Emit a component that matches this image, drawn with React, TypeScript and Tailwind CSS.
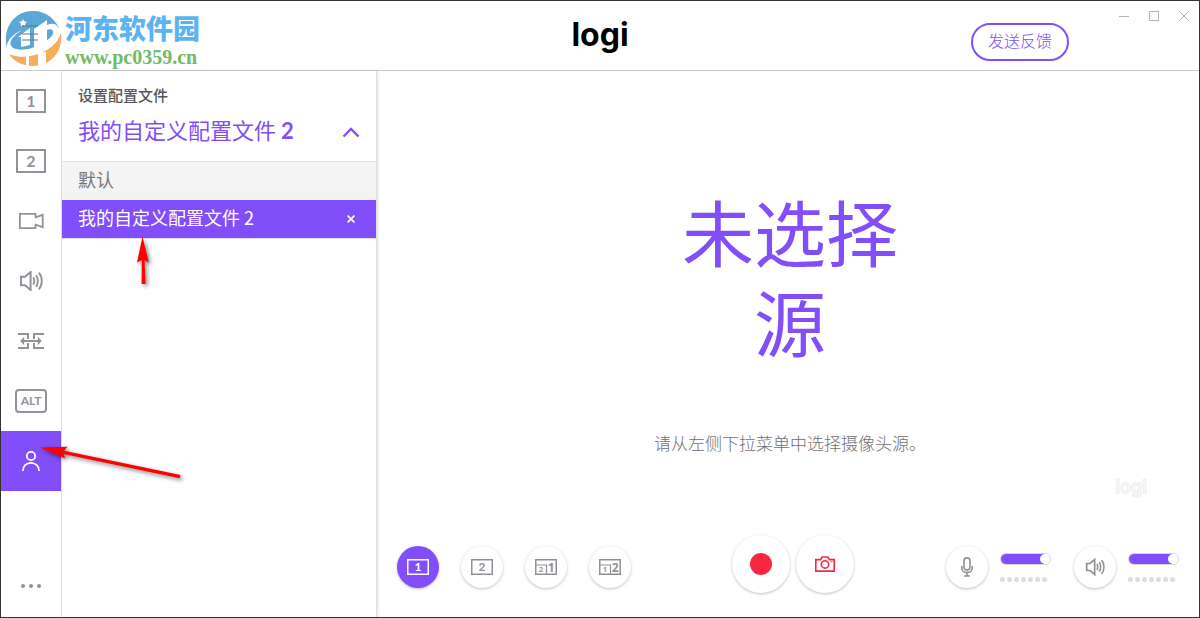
import { useState, ReactNode } from "react";

const profiles = ["默认", "我的自定义配置文件 2"];

interface IconProps {
    className?: string;
}

function SceneIcon({ label }: { label: string }) {
    return (
        <svg width="30" height="24" viewBox="0 0 30 24" fill="none" stroke="currentColor">
            <rect x="1" y="1" width="28" height="22" strokeWidth="2" />
            <text x="15" y="17.5" textAnchor="middle" fontSize="16" fontWeight="700" fill="currentColor" stroke="none" className="font-['Lato',sans-serif]">
                {label}
            </text>
        </svg>
    );
}

function SmallSceneIcon({ label }: { label: string }) {
    return (
        <svg width="22" height="16" viewBox="0 0 22 16" fill="none" stroke="currentColor">
            <rect x="0.75" y="0.75" width="20.5" height="14.5" strokeWidth="1.5" />
            <text x="11" y="12.3" textAnchor="middle" fontSize="12" fontWeight="700" fill="currentColor" stroke="none" className="font-['Lato',sans-serif]">
                {label}
            </text>
        </svg>
    );
}

function PipIcon({ main, inset }: { main: string; inset: string }) {
    return (
        <svg width="22" height="16" viewBox="0 0 22 16" fill="none" stroke="currentColor">
            <rect x="0.75" y="0.75" width="20.5" height="14.5" strokeWidth="1.5" />
            <path d="M1 6h10.5v9" strokeWidth="1.2" />
            <text x="6" y="13.3" textAnchor="middle" fontSize="7" fontWeight="700" fill="currentColor" stroke="none" className="font-['Noto_Sans',sans-serif]">
                {inset}
            </text>
            <text x="16.2" y="12.6" textAnchor="middle" fontSize="12" fontWeight="700" fill="currentColor" stroke="none" className="font-['Noto_Sans',sans-serif]">
                {main}
            </text>
        </svg>
    );
}

function VideoIcon() {
    return (
        <svg width="26" height="18" viewBox="0 0 26 18" fill="none" stroke="currentColor" strokeWidth="1.8">
            <path d="M17.5 5.5V1.9H1.9v14.2h15.6v-3.6M16.8 5.6l7.9-2.8v12.4l-7.9-2.8" />
        </svg>
    );
}

function SpeakerIcon({ className }: IconProps) {
    return (
        <svg width="24" height="20" viewBox="0 0 24 20" fill="none" stroke="currentColor" className={className}>
            <path d="M2 5.8h4L11.6 1v18L6 14.2H2z" strokeWidth="2" />
            <path d="M14.2 6.4c1.4 1.8 1.4 5.4 0 7.2M17 4.2c2.4 3 2.4 8.6 0 11.6M19.8 1.6c4 4.6 4 12.2 0 16.8" strokeWidth="1.9" />
        </svg>
    );
}

function TransitionIcon() {
    return (
        <svg width="26" height="16" viewBox="0 0 26 16" fill="none" stroke="currentColor" strokeWidth="2">
            <path d="M0 1h10v5M0 15h10v-5M26 1H16v5M26 15H16v-5M4.5 8h17" />
            <path d="M2.2 8l4-4.2v8.4zM23.8 8l-4-4.2v8.4z" fill="currentColor" stroke="none" />
        </svg>
    );
}

function AltIcon() {
    return (
        <span className="flex h-6 w-8 items-center justify-center rounded-[4px] border-2 border-[#929298] font-['Lato',sans-serif] text-xs leading-none font-bold">
            ALT
        </span>
    );
}

function UserIcon() {
    return (
        <svg width="20" height="22" viewBox="0 0 20 22" fill="none" stroke="currentColor" strokeWidth="1.8">
            <circle cx="10" cy="6" r="4.2" />
            <path d="M1.9 21c0-4.8 3.2-8.2 8.1-8.2s8.1 3.4 8.1 8.2" />
        </svg>
    );
}

function DotsIcon() {
    return (
        <svg width="20" height="4" viewBox="0 0 20 4" fill="currentColor">
            <circle cx="2" cy="2" r="2" />
            <circle cx="10" cy="2" r="2" />
            <circle cx="18" cy="2" r="2" />
        </svg>
    );
}

function CameraIcon() {
    return (
        <svg width="20" height="16" viewBox="0 0 20 16" fill="none" stroke="currentColor" strokeWidth="1.6">
            <path d="M.8 3.6h4.8L7.2 1h5.6l1.6 2.6h4.8v11.5H.8z" />
            <circle cx="10" cy="8.4" r="3.7" />
            <path d="M15.6 5.8h1.8" strokeWidth="1" />
        </svg>
    );
}

function MicIcon() {
    return (
        <svg width="12" height="20" viewBox="0 0 12 20" fill="none" stroke="currentColor" strokeWidth="1.6">
            <rect x="3" y=".9" width="6" height="12.2" rx="3" />
            <path d="M.8 9v2.2c0 2.6 2.2 4.4 5.2 4.4s5.2-1.8 5.2-4.4V9M6 15.6v3.4M3 19h6" />
        </svg>
    );
}

// Blue and orange badge of the download site
function SiteBadge() {
    return (
        <svg width="57" height="57" viewBox="0 0 57 57">
            <path d="M2 38C-3 20 8 1 28 1c13 0 23 8 27 20-1 8-7 14-17 19C26 46 9 46 2 38z" fill="#5aa7d8" />
            <path d="M4 44c14 7 40-1 52-21 2 19-10 33-28 33C17 56 8 51 4 44z" fill="#f6ad5c" />
            <path d="M21 46h3v11h-3zM33 42h8v14h-8z" fill="#fff" />
            <path d="M13 27l12-9v17l-9 2V27zM29 38V19l13-9v5c7-3 12 0 11 6-1 7-6 12-12 14v-4c5-3 8-7 7-10-1-2-4-2-6-1v14l-8 4z" fill="#fff" />
            <path d="M17 20C7 26 3 33 7 37c5 5 22 3 34-6 8-5 13-11 13-17 6 11-4 23-18 29C21 49 4 48 2 38c-1-7 6-14 15-18z" fill="#fff" />
            <path d="M18 9l1.3 2.5 2.7.3-2 1.9.5 2.7-2.5-1.3-2.4 1.3.4-2.7-2-1.9 2.8-.3z" fill="#fff" />
            <path d="M17 16h16M17 24h16M17 30h16" stroke="#55758a" strokeOpacity=".65" strokeWidth="1.5" />
        </svg>
    );
}

function RoundButton({ label, active, children }: { label: string; active?: boolean; children: ReactNode }) {
    return (
        <button
            aria-label={label}
            className={
                active
                    ? "flex size-[42px] items-center justify-center rounded-full bg-[#814efa] text-white shadow-[0_1px_3px_rgba(0,0,0,0.25)]"
                    : "flex size-[42px] items-center justify-center rounded-full bg-white text-[#8f9193] shadow-[0_1px_3px_rgba(0,0,0,0.25)]"
            }
        >
            {children}
        </button>
    );
}

function VolumeControl({ name }: { name: string }) {
    const [value, setValue] = useState(100);

    return (
        <div className="flex w-[51px] flex-col gap-3">
            <input
                type="range"
                aria-label={name}
                value={value}
                onChange={(e) => setValue(Number(e.target.value))}
                style={{ backgroundImage: `linear-gradient(to right, #814efa ${value * 0.88}%, #fff ${value * 0.88}%)` }}
                className="block h-3 w-full appearance-none rounded-full border border-[#d6d6da] [&::-webkit-slider-thumb]:size-[10px] [&::-webkit-slider-thumb]:appearance-none [&::-webkit-slider-thumb]:rounded-full [&::-webkit-slider-thumb]:bg-white"
            />
            <div className="flex gap-0.5">
                {[0, 1, 2, 3, 4, 5, 6].map((dot) => (
                    <span key={dot} className="size-[5px] rounded-full bg-[#dcdde0]" />
                ))}
            </div>
        </div>
    );
}

function Sidebar() {
    const items = [
        { name: "场景 1", icon: <SceneIcon label="1" /> },
        { name: "场景 2", icon: <SceneIcon label="2" /> },
        { name: "摄像头", icon: <VideoIcon /> },
        { name: "音频", icon: <SpeakerIcon /> },
        { name: "转场", icon: <TransitionIcon /> },
        { name: "快捷键", icon: <AltIcon /> },
    ];

    return (
        <nav className="flex w-[61px] shrink-0 flex-col border-r border-[#e4e4e6] text-[#929298]">
            {items.map((item) => (
                <button key={item.name} aria-label={item.name} className="flex h-15 items-center justify-center">
                    {item.icon}
                </button>
            ))}
            <button aria-label="配置文件" className="flex h-15 items-center justify-center bg-[#814efa] text-white">
                <UserIcon />
            </button>
            <button aria-label="更多" className="mt-auto flex h-[62px] items-center justify-center">
                <DotsIcon />
            </button>
        </nav>
    );
}

function ProfilePanel() {
    const [selected, setSelected] = useState(1);
    const [open, setOpen] = useState(true);

    return (
        <section className="w-[315px] shrink-0 border-r border-[#dedee0] shadow-[1px_0_3px_rgba(0,0,0,0.12)]">
            <div className="border-b border-[#e2e2e4] px-4 pt-3 pb-4">
                <h2 className="text-[15px] leading-6 font-medium text-[#55555a]">设置配置文件</h2>
                <button onClick={() => setOpen(!open)} className="mt-2 flex h-[30px] w-full items-center justify-between text-[22px] leading-[30px] text-[#814efa]">
                    <span>
                        我的自定义配置文件 <b className="font-['Lato','Noto_Sans_CJK_SC',sans-serif]">2</b>
                    </span>
                    <svg width="18" height="11" viewBox="0 0 18 11" fill="none" stroke="currentColor" strokeWidth="2.4" className="mt-1">
                        <path d="M1.5 9.5L9 2l7.5 7.5" />
                    </svg>
                </button>
            </div>
            {open && (
                <ul className="border-b border-[#e2e2e4]">
                    {profiles.map((profile, i) => (
                        <li
                            key={profile}
                            className={
                                i === selected
                                    ? "flex h-[38px] items-center justify-between bg-[#814efa] px-4 text-white"
                                    : "flex h-[38px] items-center justify-between bg-[#f4f4f4] px-4 text-[#77777c]"
                            }
                        >
                            <button onClick={() => setSelected(i)} className="pb-1 text-lg leading-6">
                                {profile}
                            </button>
                            {i === selected && (
                                <button aria-label="删除" className="px-[5px]">
                                    <svg width="8" height="8" viewBox="0 0 8 8" stroke="currentColor" strokeWidth="1.8">
                                        <path d="M.6.6l6.8 6.8M7.4.6L.6 7.4" />
                                    </svg>
                                </button>
                            )}
                        </li>
                    ))}
                </ul>
            )}
        </section>
    );
}

// Red pointers drawn over the window
function Arrows() {
    return (
        <svg width="200" height="500" viewBox="0 0 200 500" className="pointer-events-none absolute top-0 left-0 drop-shadow-[2px_2px_2px_rgba(0,0,0,0.5)]">
            <path d="M141.5 235.5l6.3 26-4.2-2.5 1 24h-4l.2-24-4.8 2.5z" fill="#fe0000" />
            <path d="M38.5 446.4l28-.6-3.4 4L179.5 474l-.8 3.2L62.4 453l1.8 4.6z" fill="#fe0000" />
        </svg>
    );
}

export default function App() {
    return (
        <div className="relative flex min-h-screen flex-col border border-[#333336] bg-white font-['Noto_Sans_CJK_SC',sans-serif]">
            <header className="grid h-[70px] grid-cols-3 border-b border-[#cbcbcb]">
                <div className="flex gap-[3px] pt-[9px] pl-1">
                    <SiteBadge />
                    <div className="whitespace-nowrap">
                        <div className="text-[27px] leading-[35px] font-black text-[#5cb3f2]">河东软件园</div>
                        <div className="font-['Liberation_Serif',serif] text-xl leading-6 font-bold text-[#70bb63]">www.pc0359.cn</div>
                    </div>
                </div>
                <div className="pt-[14px] text-center font-['Inter',sans-serif] text-[32px] leading-10 font-bold text-black">logi</div>
                <div className="flex items-start justify-end gap-[50px] pr-[10px]">
                    <button className="mt-[22px] h-[38px] rounded-full border-2 border-[#814efa] px-[15px] pb-1 text-base font-light text-[#814efa]">发送反馈</button>
                    <div className="mt-[10px] flex gap-5 text-[#b4b4b8]">
                        <button aria-label="最小化">
                            <svg width="10" height="10" viewBox="0 0 10 10" stroke="currentColor">
                                <path d="M0 5.5h10" />
                            </svg>
                        </button>
                        <button aria-label="最大化">
                            <svg width="10" height="10" viewBox="0 0 10 10" fill="none" stroke="currentColor">
                                <rect x=".5" y=".5" width="9" height="9" />
                            </svg>
                        </button>
                        <button aria-label="关闭">
                            <svg width="10" height="10" viewBox="0 0 10 10" stroke="currentColor">
                                <path d="M0 0l10 10M10 0L0 10" />
                            </svg>
                        </button>
                    </div>
                </div>
            </header>

            <div className="flex flex-1">
                <Sidebar />
                <ProfilePanel />
                <main className="flex flex-1 flex-col">
                    <div className="flex flex-1 flex-col items-center pt-[114px] pl-1 text-center">
                        <h1 className="max-w-64 text-[72px] leading-[90px] text-[#814efa]">未选择源</h1>
                        <p className="mt-[66px] text-[17px] leading-6 font-light text-[#707074]">请从左侧下拉菜单中选择摄像头源。</p>
                        <span className="mt-5 mr-[52px] self-end font-['Inter',sans-serif] text-lg leading-6 font-semibold text-white [-webkit-text-stroke:1px_#ececec]">logi</span>
                    </div>
                    <footer className="flex items-center justify-between pr-5 pb-6 pl-5">
                        <div className="flex gap-[22px] pt-1.5 pr-2">
                            <RoundButton label="场景 1" active>
                                <SmallSceneIcon label="1" />
                            </RoundButton>
                            <RoundButton label="场景 2">
                                <SmallSceneIcon label="2" />
                            </RoundButton>
                            <RoundButton label="画中画 1">
                                <PipIcon main="1" inset="2" />
                            </RoundButton>
                            <RoundButton label="画中画 2">
                                <PipIcon main="2" inset="1" />
                            </RoundButton>
                        </div>
                        <div className="flex gap-1.5 text-[#fa2541]">
                            <button aria-label="录制" className="flex size-[58px] items-center justify-center rounded-full bg-white shadow-[0_1px_3px_rgba(0,0,0,0.25)]">
                                <span className="size-[22px] rounded-full bg-[#fa2541]" />
                            </button>
                            <button aria-label="拍照" className="flex size-[58px] items-center justify-center rounded-full bg-white shadow-[0_1px_3px_rgba(0,0,0,0.25)]">
                                <CameraIcon />
                            </button>
                        </div>
                        <div className="flex items-center gap-[23px] pt-1.5">
                            <div className="flex items-center gap-3">
                                <RoundButton label="麦克风">
                                    <MicIcon />
                                </RoundButton>
                                <VolumeControl name="麦克风音量" />
                            </div>
                            <div className="flex items-center gap-3">
                                <RoundButton label="扬声器">
                                    <SpeakerIcon className="h-[18px] w-5" />
                                </RoundButton>
                                <VolumeControl name="扬声器音量" />
                            </div>
                        </div>
                    </footer>
                </main>
            </div>

            <Arrows />
        </div>
    );
}
